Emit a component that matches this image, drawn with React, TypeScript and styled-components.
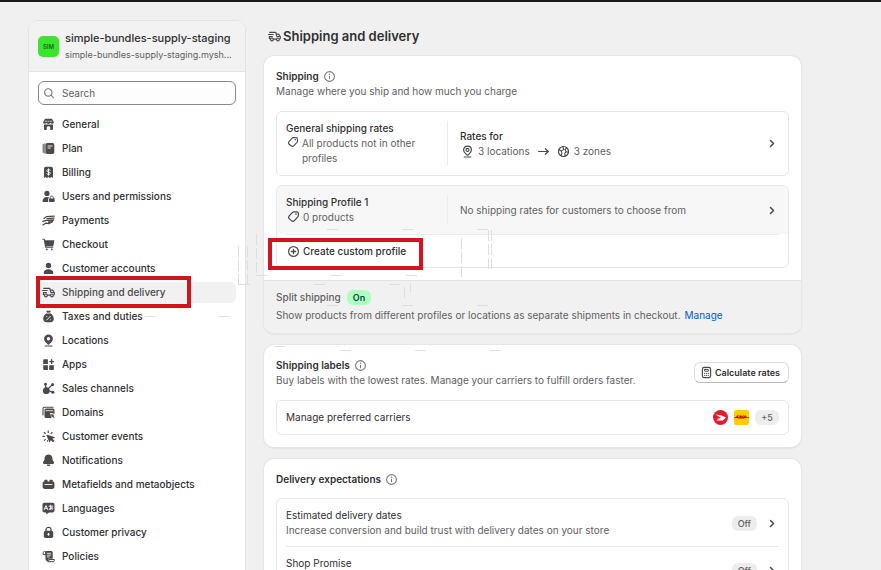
import React from "react";
import styled, { createGlobalStyle, css } from "styled-components";

const GlobalStyle = createGlobalStyle`
  *, *::before, *::after { box-sizing: border-box; }
  html, body { margin: 0; height: 100%; overflow: hidden; background: #f0f0f0; }
  body { font-family: Inter, "Liberation Sans", sans-serif; font-size: 10px; line-height: 15px; color: #303030; }
  button, input { font: inherit; color: inherit; }
  h1, h2, h3, p, ul { margin: 0; padding: 0; }
`;

/* ---------- page ---------- */

const Page = styled.div`
  position: relative;
  min-height: 100vh;
  border-top: 2px solid #1a1a1a;
`;
const Columns = styled.div`
  display: flex;
  align-items: flex-start;
  gap: 18px;
  padding: 18px 80px 24px 28px;
`;
const Guides = styled.svg`
  position: absolute;
  top: -2px;
  left: 0;
  pointer-events: none;
`;

/* ---------- sidebar ---------- */

const Sidebar = styled.aside`
  flex: 0 0 218px;
  min-width: 0;
  background: #fff;
  border: 1px solid #e3e3e3;
  border-radius: 10px;
  overflow: clip;
`;
const Store = styled.header`
  display: flex;
  align-items: center;
  gap: 6px;
  padding: 9px;
  background: #f2f2f2;
  border-bottom: 1px solid #e3e3e3;
`;
const Avatar = styled.div`
  flex: none;
  width: 21px;
  height: 21px;
  border-radius: 5px;
  background: #3be52e;
  color: #14691a;
  font-size: 6px;
  font-weight: 600;
  line-height: 21px;
  text-align: center;
`;
const StoreText = styled.div`
  min-width: 0;
  display: flex;
  flex-direction: column;
  white-space: nowrap;
`;
const StoreName = styled.strong`
  font-size: 11px;
  font-weight: 550;
  line-height: 17px;
`;
const StoreUrl = styled.span`
  color: #616161;
  font-size: 9px;
  line-height: 15px;
`;
const SearchBox = styled.label`
  display: flex;
  align-items: center;
  gap: 7px;
  height: 24px;
  margin: 9px;
  padding: 0 4px;
  border: 1px solid #8a8a8a;
  border-radius: 6px;
  background: #fdfdfd;
  color: #616161;
`;
const SearchInput = styled.input`
  flex: 1;
  min-width: 0;
  padding: 0;
  border: 0;
  outline: 0;
  background: transparent;
  &::placeholder { color: #616161; opacity: 1; }
`;
const NavList = styled.ul`
  display: flex;
  flex-direction: column;
  gap: 3px;
  padding: 0 9px 12px;
  list-style: none;
`;
const NavItem = styled.li`
  position: relative;
`;
const NavLink = styled.a<{ $active?: boolean }>`
  display: flex;
  align-items: center;
  gap: 7px;
  height: 21px;
  padding: 0 4px;
  border-radius: 6px;
  color: #303030;
  font-weight: 500;
  text-decoration: none;
  ${(p) => p.$active && css`background: #f1f1f1; color: #4a4a4a;`}
`;
const Marker = styled.span<{ $place: "nav" | "action" }>`
  position: absolute;
  width: 155px;
  height: 32px;
  border: 4px solid #d0161c;
  pointer-events: none;
  ${(p) => (p.$place === "nav" ? css`top: -6px; left: -2px;` : css`top: 3px; left: -18px;`)}
`;

/* ---------- main column ---------- */

const Main = styled.main`
  flex: 1;
  min-width: 0;
  display: flex;
  flex-direction: column;
  gap: 12px;
`;
const Title = styled.h1`
  display: flex;
  align-items: center;
  gap: 2px;
  margin-top: 8px;
  padding-left: 4px;
  font-size: 13px;
  font-weight: 600;
  line-height: 16px;
`;
const Card = styled.section`
  background: #fff;
  border-radius: 10px;
  box-shadow: 0 0 0 1px #e6e6e6, 0 1px 2px rgba(0, 0, 0, 0.15);
  overflow: clip;
`;
const CardBody = styled.div<{ $gap?: number }>`
  display: flex;
  flex-direction: column;
  gap: ${(p) => p.$gap ?? 12}px;
  padding: 12px;
`;
const CardHead = styled.header`
  display: flex;
  align-items: center;
  justify-content: space-between;
`;
const CardTitle = styled.h2`
  display: flex;
  align-items: center;
  gap: 4px;
  height: 16px;
  font-size: 10px;
  font-weight: 600;
`;
const Muted = styled.p`
  color: #616161;
`;
const Stack = styled.div`
  display: flex;
  flex-direction: column;
  gap: 9px;
`;
const Box = styled.div`
  border: 1px solid #e6e6e6;
  border-radius: 6px;
`;
const ProfileRow = styled.a<{ $shaded?: boolean }>`
  display: grid;
  grid-template-columns: 162px 1fr auto;
  align-items: center;
  padding: 9px;
  color: inherit;
  text-decoration: none;
  ${(p) => p.$shaded && css`background: #f7f7f7; border-radius: 6px 6px 0 0;`}
`;
const ProfileInfo = styled.div`
  border-right: 1px solid #ececec;
  padding-right: 12px;
`;
const RateInfo = styled.div`
  padding-left: 12px;
`;
const RowTitle = styled.h3<{ $weight?: number }>`
  font-size: 10px;
  font-weight: ${(p) => p.$weight ?? 500};
  line-height: 15px;
`;
const Detail = styled.div`
  display: flex;
  align-items: flex-start;
  gap: 3px;
  padding-left: 1px;
  color: #616161;
`;
const Locations = styled.div`
  display: flex;
  align-items: center;
  gap: 7px;
  padding-left: 1px;
  color: #616161;
`;
const Place = styled.span`
  display: flex;
  align-items: center;
  gap: 4px;
`;
const CreateRow = styled.div`
  position: relative;
  margin: 0 9px;
  border-top: 1px solid #ececec;
  padding: 8px 1px;
`;
const PlainButton = styled.button`
  display: flex;
  align-items: center;
  gap: 3px;
  height: 16px;
  padding: 0;
  border: 0;
  background: none;
  font-weight: 500;
`;
const SplitFooter = styled.footer`
  display: flex;
  flex-direction: column;
  gap: 3px;
  padding: 9px 12px 10px;
  background: #f1f1f1;
  border-top: 1px solid #e3e3e3;
  color: #616161;
`;
const SplitTitle = styled.div`
  display: flex;
  align-items: center;
  gap: 6px;
  font-weight: 500;
`;
const Badge = styled.span<{ $on?: boolean }>`
  min-width: 24px;
  height: 15px;
  padding: 0 6px;
  border-radius: 6px;
  background: ${(p) => (p.$on ? "#affebf" : "#ededed")};
  color: ${(p) => (p.$on ? "#014b40" : "#616161")};
  font-size: 9px;
  font-weight: ${(p) => (p.$on ? 600 : 500)};
  text-align: center;
`;
const BlueLink = styled.a`
  margin-left: 4px;
  color: #005bd3;
  text-decoration: none;
`;
const OutlineButton = styled.button`
  display: flex;
  align-items: center;
  gap: 2px;
  height: 21px;
  padding: 0 8px 0 5px;
  border: 1px solid #dcdcdc;
  border-bottom-color: #b8b8b8;
  border-radius: 6px;
  background: #fff;
  font-size: 9px;
  font-weight: 600;
`;
const CarrierRow = styled.div`
  display: flex;
  align-items: center;
  gap: 6px;
  padding: 9px;
`;
const Grow = styled.div`
  flex: 1;
  align-self: flex-start;
`;
const SettingRow = styled.a`
  display: flex;
  align-items: center;
  gap: 9px;
  min-height: 47px;
  margin: 0 9px;
  padding: 9px 0 8px;
  color: inherit;
  text-decoration: none;
  & + & { border-top: 1px solid #e6e6e6; }
`;

/* ---------- icons ---------- */

const Svg = styled.svg<{ $soft?: boolean }>`
  flex: none;
  display: block;
  color: ${(p) => (p.$soft ? "#7a7a7a" : "#4a4a4a")};
`;
type IconName = keyof typeof glyphs;
const stroke = { fill: "none", stroke: "currentColor", strokeLinecap: "round", strokeLinejoin: "round" } as const;

const glyphs = {
  general: (
    <>
      <path fill="currentColor" d="M3 .8h7l1.700 2.900c.3 1.200-.3 2-1.300 2-.9 0-1.400-.5-1.700-1-.4.7-1.100 1-2.200 1s-1.800-.3-2.200-1c-.3.5-.8 1-1.700 1-1 0-1.600-.8-1.300-2z" />
      <path fill="currentColor" d="M2 6.400h9V11a1 1 0 0 1-1 1H8.300V9.700c0-1-.8-1.500-1.800-1.500s-1.800.5-1.800 1.500V12H3a1 1 0 0 1-1-1z" />
      <path {...stroke} stroke="#fff" strokeWidth=".7" d="M3.200 3.200h1.600M6 3.200h1M8.200 3.200h1.600" />
    </>
  ),
  plan: (
    <>
      <path {...stroke} strokeWidth="1" d="M1.200 2.500v8M2.900 1.800v9.600" />
      <rect x="3.600" y="1" width="8.700" height="11" rx="1.800" fill="currentColor" />
      <path {...stroke} stroke="#fff" strokeWidth=".9" d="M6 4h4.200M6 6h2.300" />
    </>
  ),
  billing: (
    <>
      <path fill="currentColor" d="M4 .8h5a2 2 0 0 1 2 2V12l-1.500-1-1.500 1-1.500-1L5 12l-1.500-1L2 12V2.800a2 2 0 0 1 2-2z" />
      <path {...stroke} stroke="#fff" strokeWidth="1" d="M8.200 4.300c-.4-.6-1-.7-1.700-.7-1 0-1.700.4-1.700 1.200 0 1.600 3.500.8 3.500 2.400 0 .8-.8 1.200-1.800 1.200-.8 0-1.400-.2-1.800-.8M6.500 2.800v6.400" />
    </>
  ),
  users: (
    <>
      <circle cx="5" cy="3.400" r="2.600" fill="currentColor" />
      <path fill="currentColor" d="M.5 11.600C.5 8.600 2.400 6.900 5 6.900c1 0 1.600.2 2.200.6-.8.500-1 1.200-1 2V12H1z" />
      <path fill="currentColor" d="M7 8.600h5.700v2.600a.8.8 0 0 1-.8.8H7.800a.8.8 0 0 1-.8-.8z" />
      <path {...stroke} strokeWidth="1" d="M8.300 9V7.600c0-2 3-2 3 0V9" />
    </>
  ),
  payments: (
    <>
      <path {...stroke} strokeWidth="1.200" d="M2 4.500 4.300 2.600l7.900-.4M5 4.700l7-.5" />
      <path {...stroke} strokeWidth="1.300" d="M.8 7.300l3.400-1 7.400-.3-2.500 2H6.600M1 11l2.600-1.800 3.400.3 3.300-1.700" />
    </>
  ),
  checkout: (
    <>
      <path {...stroke} strokeWidth="1.100" d="M.8 1.200h1.400l1.500 7.900h7.200" />
      <path fill="currentColor" d="M2.500 2.300h9.900l-1.100 5.700H3.500z" />
      <circle cx="4.800" cy="11.400" r=".9" fill="currentColor" />
      <circle cx="9.800" cy="11.400" r=".9" fill="currentColor" />
    </>
  ),
  customer: (
    <>
      <circle cx="6.500" cy="3.500" r="2.700" fill="currentColor" />
      <path fill="currentColor" d="M1.700 10.700c0-2 2-3.400 4.800-3.400s4.800 1.400 4.800 3.400c0 .8-.5 1.300-1.300 1.300H3c-.8 0-1.300-.5-1.300-1.300z" />
    </>
  ),
  truck: (
    <>
      <path {...stroke} strokeWidth="1.200" d="M1.700 2.300h5.400c.6 0 .9.300 1 .9l.2 1h1.600c.8 0 1.200.4 1.500 1l.8 1.500c.3.600.3 2.200-.4 2.300M5.500 9.100h2.800M.6 4.500h4.600M1.400 6.700h3M1.400 6.700v1.800l.9.600" />
      <circle {...stroke} strokeWidth="1.200" cx="3.900" cy="9.400" r="1.400" />
      <circle {...stroke} strokeWidth="1.200" cx="9.900" cy="9.400" r="1.400" />
      <path {...stroke} strokeWidth="1.100" d="M8.300 4.300 8.800 6.500h3.200" />
    </>
  ),
  taxes: (
    <>
      <path fill="currentColor" d="M4.200.8h4.600L8 3.100C10.300 4.300 11.800 6.700 11.800 9c0 2-1.300 3.200-3.200 3.200H4.400c-1.900 0-3.200-1.200-3.200-3.200 0-2.300 1.500-4.700 3.800-5.900z" />
      <path {...stroke} stroke="#fff" strokeWidth=".9" d="M8.400 6.300 4.800 9.900M4.800 6.500h.1M8.300 9.800h.1M4.900 3.100h3.200" />
    </>
  ),
  pinSolid: (
    <>
      <path fill="currentColor" fillRule="evenodd" d="M6.500.6c2.500 0 4.400 1.800 4.400 4.200 0 2.600-2 4-3.500 5.400a1.300 1.300 0 0 1-1.800 0C4.100 8.800 2.100 7.400 2.100 4.800 2.100 2.400 4 .6 6.500.6zm0 2.500a1.700 1.700 0 1 0 0 3.400 1.700 1.700 0 0 0 0-3.400z" />
      <path {...stroke} strokeWidth="1.100" d="M3 12h7" />
    </>
  ),
  apps: (
    <>
      <path fill="currentColor" d="M2.200 1.200H5.900V5.900H1.200V2.200a1 1 0 0 1 1-1zM1.200 7.200h4.700v4.700H2.200a1 1 0 0 1-1-1zM7.200 7.200h4.700v3.700a1 1 0 0 1-1 1H7.200z" />
      <path {...stroke} strokeWidth="1.400" d="M9.600 1.800v3.600M7.800 3.600h3.600" />
    </>
  ),
  channels: (
    <>
      <circle cx="4.300" cy="8.700" r="3.400" fill="currentColor" />
      <circle cx="3.500" cy="2.200" r="1.400" fill="currentColor" />
      <circle cx="10.600" cy="2.400" r="1.500" fill="currentColor" />
      <circle cx="10.900" cy="10.300" r="1.500" fill="currentColor" />
      <path {...stroke} strokeWidth="1.300" d="M3.500 2.200 4 8M10.600 2.400 5 8M6 8.500l5 1.800" />
    </>
  ),
  domains: (
    <>
      <path {...stroke} strokeWidth="1.100" d="M1 9V2.500c0-.8.500-1.300 1.300-1.300h8.700" />
      <path fill="currentColor" d="M4 2.600h7A1.500 1.500 0 0 1 12.500 4.100v3.700L8 6.800l1.500 5.200H4a1.500 1.500 0 0 1-1.500-1.500V4.100A1.500 1.500 0 0 1 4 2.600z" />
      <path fill="currentColor" d="m9 8 3.700 1-1.400.8 1.200 1.400-.8.700-1.200-1.300-.8 1.100z" />
      <path {...stroke} stroke="#fff" strokeWidth=".8" d="M4 4.700h7" />
    </>
  ),
  events: (
    <>
      <path {...stroke} strokeWidth="1.100" d="M6.200.9v1.500M2.300 2.500l1 1M.9 6.400h1.500M2.300 10.300l1-1M10.100 2.500l-1 1M5.500 10.500v.8" />
      <path fill="currentColor" d="M5.200 4.800 12.400 7c.5.200.5.700 0 .9l-1.900.9 1.900 2-1.500 1.400-2-2-1 1.700c-.2.400-.7.300-.8-.1L4.500 5.500c-.1-.4.200-.8.700-.7z" />
    </>
  ),
  bell: (
    <path fill="currentColor" d="M6.500.6c2.300 0 3.700 1.500 3.900 3.700.1 1.600.4 2.500 1.200 3.300.9.900.5 2.400-.9 2.400H2.300C.9 10 .5 8.500 1.400 7.600c.8-.8 1.100-1.700 1.200-3.300C2.800 2.100 4.200.6 6.500.6zM4.700 10.600h3.600c-.2 1-.8 1.700-1.800 1.700s-1.600-.7-1.800-1.700z" />
  ),
  meta: (
    <>
      <path fill="currentColor" d="M2.200 3.500V2.800c0-.7.400-1.100 1.100-1.100h1.200c.7 0 1.100.4 1.100 1.100v.7h1.800v-.7c0-.7.400-1.100 1.100-1.100h1.200c.7 0 1.100.4 1.100 1.100v.7c1 .2 1.600.8 1.600 1.800v3.500c0 1.300-.9 2.100-2.200 2.100H2.800C1.500 10.900.6 10.100.6 8.800V5.300c0-1 .6-1.600 1.600-1.800z" />
      <path {...stroke} stroke="#fff" strokeWidth=".9" d="M3 6.500h7" />
    </>
  ),
  languages: (
    <>
      <path fill="currentColor" d="M2.300.8h8.400c1 0 1.800.8 1.800 1.800v6c0 1-.8 1.800-1.800 1.800H7L4.200 12.500v-2.100H2.300c-1 0-1.800-.8-1.800-1.800v-6C.5 1.600 1.300.8 2.300.8z" />
      <path {...stroke} stroke="#fff" strokeWidth=".9" d="M2.200 7.700 4 3.500l1.800 4.200M2.900 6.300h2.200M7 4.200h3.800M8.700 3.200v3.500M10 5.300c-.4 1.700-1.300 2.400-2.500 2.300-.6-1.100 1.400-2.300 3.100-1.300.3.600 0 1.100-.6 1.400" />
    </>
  ),
  lock: (
    <>
      <path {...stroke} strokeWidth="1.200" d="M4 5.500V3.400c0-2.600 5-2.600 5 0v2.100" />
      <rect x="1.800" y="4.700" width="9.400" height="7.300" rx="1.800" fill="currentColor" />
      <path {...stroke} stroke="#fff" strokeWidth="1" d="M6.500 7.300v2M5.700 8.300h1.600" />
    </>
  ),
  policies: (
    <>
      <path fill="currentColor" d="M3.300 1h5.800c1 0 1.600.6 1.600 1.600v6.200H6.500v2.500c-2 0-3-.7-3-2.400z" />
      <path {...stroke} strokeWidth="1" d="M3.600 4.600H1.200V2.700c0-.8.500-1.200 1.200-1.200s1.200.5 1.200 1.200zM6.900 9.900v.6c0 .7-.5 1.200-1.200 1.200h5.400c.7 0 1.200-.5 1.200-1.200v-.6z" />
      <path {...stroke} stroke="#fff" strokeWidth=".8" d="M5.300 3.300h3.400M5.300 5.100h3.400M5.300 6.900h2" />
    </>
  ),
  search: (
    <>
      <circle {...stroke} strokeWidth="1.200" cx="5.700" cy="5.900" r="4" />
      <path {...stroke} strokeWidth="1.200" d="m8.700 8.900 2.500 2.600" />
    </>
  ),
  info: (
    <>
      <circle {...stroke} strokeWidth="1.100" cx="6.500" cy="6.500" r="4.900" />
      <path {...stroke} strokeWidth="1" d="M6.500 6.200v2.600" />
      <circle cx="6.500" cy="4.300" r=".7" fill="currentColor" />
    </>
  ),
  tag: (
    <>
      <path {...stroke} strokeWidth="1.200" d="M7 1.800h2.600c1.100 0 1.800.7 1.800 1.800v1.700c0 .6-.2 1-.6 1.500L7.600 10.300c-1 1.100-2.300 1.200-3.300.3L2.400 8.900c-1-.9-.9-2.200 0-3.200L5.300 2.600c.5-.5 1-.8 1.700-.8z" />
      <circle cx="9" cy="4.100" r=".8" fill="currentColor" />
    </>
  ),
  pin: (
    <>
      <path {...stroke} strokeWidth="1.200" d="M6.500 1.200c2.300 0 3.900 1.600 3.900 3.700 0 2.500-1.900 3.600-3.300 5-.4.400-.8.400-1.200 0-1.400-1.400-3.300-2.500-3.300-5 0-2.100 1.600-3.700 3.900-3.700zM3.200 12h6.600" />
      <circle {...stroke} strokeWidth="1.200" cx="6.500" cy="4.900" r="1.500" />
    </>
  ),
  arrow: <path {...stroke} strokeWidth="1.200" d="M1.600 6.500h9.800M8.300 3.700l3.100 2.800-3.100 2.800" />,
  globe: (
    <>
      <circle {...stroke} strokeWidth="1.200" cx="6.500" cy="6.500" r="5" />
      <path {...stroke} strokeWidth="1.100" d="M2 4.800l2.300 1.300.7 2.200-1 2.200M4.300 6.100 6.800 4.400 5.800 1.800M8.200 11l-.5-2.700 1.500-1.600 2.100.6M9.200 6.700 8 4.600l1.600-1.700" />
    </>
  ),
  chevron: <path {...stroke} strokeWidth="1.500" d="m4.500 3.500 3 3-3 3" />,
  plus: (
    <>
      <circle {...stroke} strokeWidth="1.200" cx="6.500" cy="6.500" r="4.900" />
      <path {...stroke} strokeWidth="1.300" d="M6.500 4.400v4.200M4.400 6.500h4.200" />
    </>
  ),
  calculator: (
    <>
      <rect {...stroke} strokeWidth="1.200" x="2.400" y="1.400" width="8.200" height="10.200" rx="1.800" />
      <rect {...stroke} strokeWidth="1" x="4.500" y="3.400" width="4" height="1.800" rx=".4" />
      <path {...stroke} strokeWidth="1.200" d="M4.600 7.300h.1M6.500 7.300h.1M8.400 7.300h.1M4.600 9.300h.1M6.500 9.300h.1M8.400 9.300h.1" />
    </>
  ),
};

function Icon({ name, size = 13, soft }: { name: IconName; size?: number; soft?: boolean }) {
  return (
    <Svg width={size} height={size} viewBox="0 0 13 13" aria-hidden="true" $soft={soft}>
      {glyphs[name]}
    </Svg>
  );
}

function PostLogo() {
  return (
    <Svg width="15" height="15" viewBox="0 0 15 15" role="img" aria-label="Canada Post">
      <circle cx="7.500" cy="7.500" r="7.500" fill="#e8192c" />
      <path fill="#fff" d="M2.300 4.600 8 5.300l5 2.200-3.200 3H3.400c.7-.8 1.700-1.200 3.100-1.400L3.900 8.800l4.300-.9z" />
    </Svg>
  );
}
function DhlLogo() {
  return (
    <Svg width="15" height="15" viewBox="0 0 15 15" role="img" aria-label="DHL">
      <rect width="15" height="15" rx="2.500" fill="#fc0" />
      <path fill="#d40511" d="M2.800 5.500h3.300c.8 0 .7.800.3 1.300H5l.4-.6h-.9l-.7 1.100H2zM6.900 5.500h1.200l-.5.700h.9l.5-.7h1.200L9 7.300H7.800l.4-.5h-.8l-.4.500H5.800zM10.700 5.500h1.500l-.7 1.100h1.400l-.5.700H9.600zM0 7.300h15v.7H0zM4 8.400h6.500l-.4.500H3.600z" />
    </Svg>
  );
}

/* ---------- data ---------- */

const navigation: { icon: IconName; label: string; active?: boolean }[] = [
  { icon: "general", label: "General" },
  { icon: "plan", label: "Plan" },
  { icon: "billing", label: "Billing" },
  { icon: "users", label: "Users and permissions" },
  { icon: "payments", label: "Payments" },
  { icon: "checkout", label: "Checkout" },
  { icon: "customer", label: "Customer accounts" },
  { icon: "truck", label: "Shipping and delivery", active: true },
  { icon: "taxes", label: "Taxes and duties" },
  { icon: "pinSolid", label: "Locations" },
  { icon: "apps", label: "Apps" },
  { icon: "channels", label: "Sales channels" },
  { icon: "domains", label: "Domains" },
  { icon: "events", label: "Customer events" },
  { icon: "bell", label: "Notifications" },
  { icon: "meta", label: "Metafields and metaobjects" },
  { icon: "languages", label: "Languages" },
  { icon: "lock", label: "Customer privacy" },
  { icon: "policies", label: "Policies" },
];

const guideLines =
  "M145 316.500h10M219 316.500h11M239 284.500h11M256 275.500h11" +
  "M238.500 246v11m0 3v11m0 3v11M247.500 246v11m0 3v11m0 3v11M256.500 234v11m0 3v11m0 3v11" +
  "M327 229.500h11M402 229.500h11M477 229.500h11" +
  "M461.500 238v11m0 3v11m0 3v11M488.500 230v11m0 3v11m0 3v11M491.500 230v11m0 3v11m0 3v11" +
  "M331 275.500h11M406 275.500h11M314 284.500h11M389 284.500h11M404.500 287v11M410.500 284v8" +
  "M327 305.500h11M402 305.500h11M477 305.500h11M274 346.500h11M340 350.500h11M415 350.500h11M490 350.500h11";

export default function App() {
  return (
    <>
      <GlobalStyle />
      <Page>
        <Columns>
          <Sidebar>
            <Store>
              <Avatar>SIM</Avatar>
              <StoreText>
                <StoreName>simple-bundles-supply-staging</StoreName>
                <StoreUrl>simple-bundles-supply-staging.mysh...</StoreUrl>
              </StoreText>
            </Store>
            <SearchBox>
              <Icon name="search" size={12} soft />
              <SearchInput type="search" placeholder="Search" aria-label="Search" />
            </SearchBox>
            <nav aria-label="Settings">
              <NavList>
                {navigation.map((item) => (
                  <NavItem key={item.label}>
                    <NavLink href="#" $active={item.active} aria-current={item.active ? "page" : undefined}>
                      <Icon name={item.icon} />
                      {item.label}
                    </NavLink>
                    {item.active && <Marker $place="nav" />}
                  </NavItem>
                ))}
              </NavList>
            </nav>
          </Sidebar>

          <Main>
            <Title>
              <Icon name="truck" />
              Shipping and delivery
            </Title>

            <Card>
              <CardBody>
                <div>
                  <CardTitle>
                    Shipping <Icon name="info" soft />
                  </CardTitle>
                  <Muted>Manage where you ship and how much you charge</Muted>
                </div>
                <Stack>
                  <Box>
                    <ProfileRow href="#">
                      <ProfileInfo>
                        <RowTitle>General shipping rates</RowTitle>
                        <Detail>
                          <Icon name="tag" size={12} />
                          <span>All products not in other profiles</span>
                        </Detail>
                      </ProfileInfo>
                      <RateInfo>
                        <RowTitle>Rates for</RowTitle>
                        <Locations>
                          <Place>
                            <Icon name="pin" />3 locations
                          </Place>
                          <Icon name="arrow" />
                          <Place>
                            <Icon name="globe" />3 zones
                          </Place>
                        </Locations>
                      </RateInfo>
                      <Icon name="chevron" />
                    </ProfileRow>
                  </Box>
                  <Box>
                    <ProfileRow href="#" $shaded>
                      <ProfileInfo>
                        <RowTitle>Shipping Profile 1</RowTitle>
                        <Detail>
                          <Icon name="tag" />
                          0 products
                        </Detail>
                      </ProfileInfo>
                      <RateInfo>
                        <Muted>No shipping rates for customers to choose from</Muted>
                      </RateInfo>
                      <Icon name="chevron" />
                    </ProfileRow>
                    <CreateRow>
                      <PlainButton type="button">
                        <Icon name="plus" />
                        Create custom profile
                      </PlainButton>
                      <Marker $place="action" />
                    </CreateRow>
                  </Box>
                </Stack>
              </CardBody>
              <SplitFooter>
                <SplitTitle>
                  Split shipping <Badge $on>On</Badge>
                </SplitTitle>
                <p>
                  Show products from different profiles or locations as separate shipments in checkout.
                  <BlueLink href="#">Manage</BlueLink>
                </p>
              </SplitFooter>
            </Card>

            <Card>
              <CardBody>
                <CardHead>
                  <div>
                    <CardTitle>
                      Shipping labels <Icon name="info" soft />
                    </CardTitle>
                    <Muted>Buy labels with the lowest rates. Manage your carriers to fulfill orders faster.</Muted>
                  </div>
                  <OutlineButton type="button">
                    <Icon name="calculator" />
                    Calculate rates
                  </OutlineButton>
                </CardHead>
                <Box>
                  <CarrierRow>
                    <Grow>
                      <RowTitle $weight={400}>Manage preferred carriers</RowTitle>
                    </Grow>
                    <PostLogo />
                    <DhlLogo />
                    <Badge>+5</Badge>
                  </CarrierRow>
                </Box>
              </CardBody>
            </Card>

            <Card>
              <CardBody $gap={11}>
                <CardTitle>
                  Delivery expectations <Icon name="info" soft />
                </CardTitle>
                <Box>
                  <SettingRow href="#">
                    <Grow>
                      <RowTitle $weight={400}>Estimated delivery dates</RowTitle>
                      <Muted>Increase conversion and build trust with delivery dates on your store</Muted>
                    </Grow>
                    <Badge>Off</Badge>
                    <Icon name="chevron" />
                  </SettingRow>
                  <SettingRow href="#">
                    <Grow>
                      <RowTitle $weight={400}>Shop Promise</RowTitle>
                    </Grow>
                    <Badge>Off</Badge>
                    <Icon name="chevron" />
                  </SettingRow>
                </Box>
              </CardBody>
            </Card>
          </Main>
        </Columns>
        <Guides width="510" height="360" aria-hidden="true">
          <path d={guideLines} fill="none" stroke="#dedede" />
        </Guides>
      </Page>
    </>
  );
}
